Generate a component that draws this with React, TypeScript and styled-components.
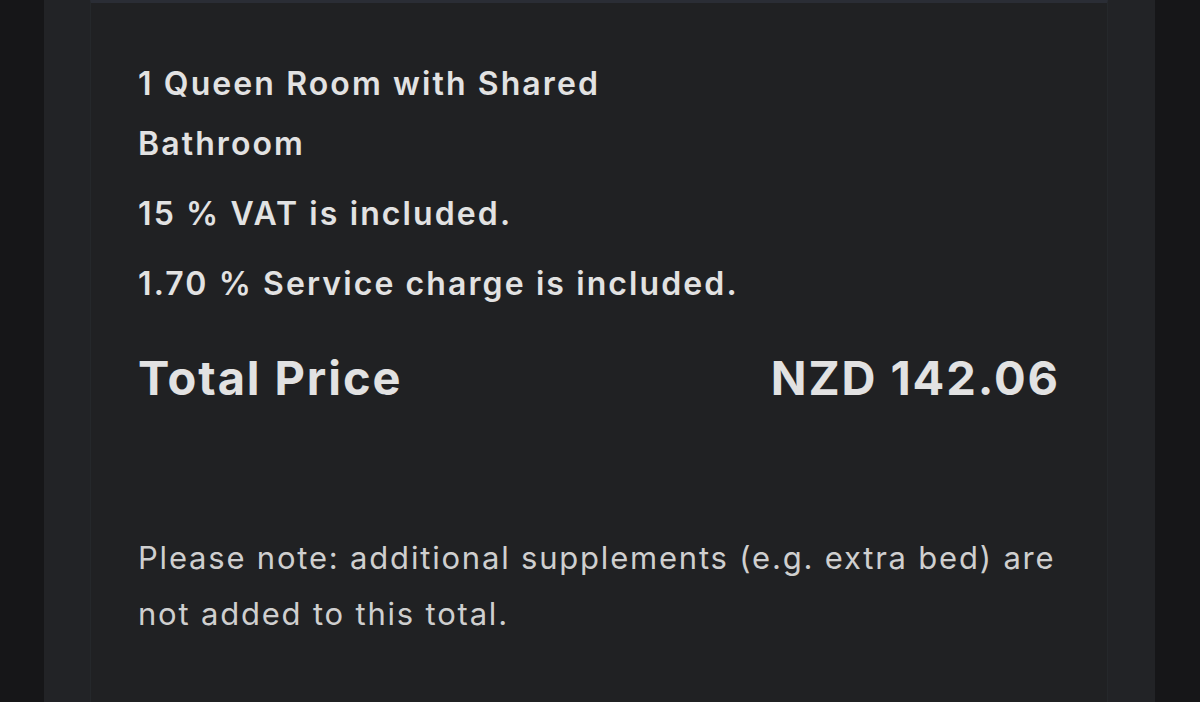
import styled, { createGlobalStyle } from 'styled-components'

const GlobalStyle = createGlobalStyle`
  html, body {
    margin: 0;
    padding: 0;
    background: #161618;
    font-family: Inter, "Open Sans", "Liberation Sans", sans-serif;
  }
`

const Screen = styled.div`
  height: 702px;
  overflow: hidden;
  padding: 0 45px 0 44px;
  background: #161618;
`

const Panel = styled.div`
  height: 100%;
  background: #222326;
  padding: 0 47px 0 46px;
`

const Card = styled.div`
  height: 100%;
  background: #202123;
  border-left: 1px solid #25282b;
  border-right: 1px solid #25282b;
  border-top: 3px solid #2a2d35;
  box-sizing: border-box;
  padding: 51px 47px 0 47px;
  color: #e2e2e2;
`

const RoomName = styled.div`
  max-width: 560px;
  font-size: 32px;
  font-weight: 600;
  line-height: 60px;
  letter-spacing: 2.1px;
`

const Line = styled.div`
  font-size: 32px;
  font-weight: 600;
  line-height: 60px;
  margin-top: 10px;
  letter-spacing: 2.1px;
`

const TotalRow = styled.div`
  display: flex;
  justify-content: space-between;
  align-items: baseline;
  margin-top: 34px;
  font-size: 47px;
  font-weight: 700;
  line-height: 60px;
  letter-spacing: 1.9px;
`

const Note = styled.p`
  margin: 122px 0 0;
  font-size: 31px;
  font-weight: 400;
  line-height: 56px;
  color: #cfcfcf;
  letter-spacing: 1.8px;
`

export default function App() {
  return (
    <Screen>
      <GlobalStyle />
      <Panel>
        <Card>
          <RoomName>1 Queen Room with Shared Bathroom</RoomName>
          <Line>15 % VAT is included.</Line>
          <Line>1.70 % Service charge is included.</Line>
          <TotalRow>
            <span>Total Price</span>
            <span>NZD 142.06</span>
          </TotalRow>
          <Note>
            Please note: additional supplements (e.g. extra bed) are not added to this total.
          </Note>
        </Card>
      </Panel>
    </Screen>
  )
}
